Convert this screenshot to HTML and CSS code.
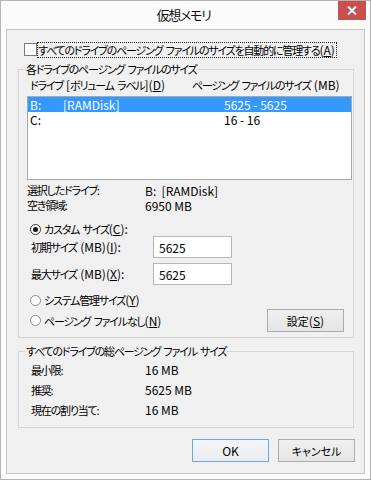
FILE: index.html
```html
<!DOCTYPE html>
<html lang="ja">
  <head>
    <meta charset="UTF-8" />
    <meta name="viewport" content="width=device-width, initial-scale=1.0" />
    <title>仮想メモリ</title>
    <link rel="stylesheet" href="styles.css">
  </head>
  <body>
    <div class="window">
      <div class="titlebar">
        <span></span>
        <div class="title">仮想メモリ</div>
        <div class="close">
          <svg width="28" height="19" viewBox="0 0 28 19">
            <path d="M10 5.5 L18 13.5 M18 5.5 L10 13.5" stroke="#fff" stroke-width="1.8" fill="none" />
          </svg>
        </div>
      </div>
      <div class="client">
        <div class="auto">
          <span class="checkbox"></span>
          <span class="focus">すべてのドライブのページング ファイルのサイズを自動的に管理する<span class="lat">(<u>A</u>)</span></span>
        </div>

        <fieldset class="group drives">
          <legend>各ドライブのページング ファイルのサイズ</legend>
          <div class="list-head">
            <span>ドライブ <span class="lat">[</span>ボリューム ラベル<span class="lat">](<u>D</u>)</span></span>
            <span>ページング ファイルのサイズ <span class="lat">(MB)</span></span>
          </div>
          <div class="listbox">
            <div class="row selected">
              <span class="lat">B:</span><span class="lat">[RAMDisk]</span><span class="lat">5625 - 5625</span>
            </div>
            <div class="row">
              <span class="lat">C:</span><span></span><span class="lat">16 - 16</span>
            </div>
          </div>
          <div class="info">
            <div class="pair"><span class="key">選択したドライブ:</span><span class="lat">B:&nbsp;&nbsp;[RAMDisk]</span></div>
            <div class="pair"><span class="key">空き領域:</span><span class="lat">6950 MB</span></div>
          </div>

          <div class="radio-row custom">
            <span class="radio checked"></span>
            <span>カスタム サイズ<span class="lat">(<u>C</u>):</span></span>
          </div>
          <div class="size-row first">
            <span>初期サイズ <span class="lat">(MB)(<u>I</u>):</span></span>
            <input class="textbox" type="text" value="5625" />
          </div>
          <div class="size-row">
            <span>最大サイズ <span class="lat">(MB)(<u>X</u>):</span></span>
            <input class="textbox" type="text" value="5625" />
          </div>
          <div class="radio-row system">
            <span class="radio"></span>
            <span>システム管理サイズ<span class="lat">(<u>Y</u>)</span></span>
          </div>
          <div class="last-row">
            <div class="radio-row">
              <span class="radio"></span>
              <span>ページング ファイルなし<span class="lat">(<u>N</u>)</span></span>
            </div>
            <button class="btn set">設定<span class="lat">(<u>S</u>)</span></button>
          </div>
        </fieldset>

        <fieldset class="group totals">
          <legend>すべてのドライブの総ページング ファイル サイズ</legend>
          <div class="pair"><span class="key">最小限:</span><span class="lat">16 MB</span></div>
          <div class="pair"><span class="key">推奨:</span><span class="lat">5625 MB</span></div>
          <div class="pair"><span class="key">現在の割り当て:</span><span class="lat">16 MB</span></div>
        </fieldset>

        <div class="actions">
          <button class="btn default"><span class="lat">OK</span></button>
          <button class="btn">キャンセル</button>
        </div>
      </div>
    </div>
  </body>
</html>
```

FILE: styles.css
```css
* {
  box-sizing: border-box;
}
body {
  margin: 0;
  font-family: "Noto Sans CJK JP", "Noto Sans", sans-serif;
  font-size: 11px;
  line-height: 14px;
  letter-spacing: -1.2px;
  word-spacing: 2px;
  white-space: nowrap;
  color: #000;
  font-feature-settings: "palt";
  background: #fff;
}
u {
  text-decoration-thickness: 1px;
}
.lat {
  font-size: 12px;
  letter-spacing: 0;
  word-spacing: 0;
}
.window {
  width: 371px;
  height: 480px;
  border: 1px solid #b4b4b4;
  background: #fbfbfb;
  padding: 0 5px 5px;
  display: flex;
  flex-direction: column;
}
.titlebar {
  height: 28px;
  margin: 0 -5px;
  padding-right: 4px;
  display: grid;
  grid-template-columns: 1fr auto 1fr;
  align-items: start;
}
.title {
  font-size: 13px;
  letter-spacing: -1.3px;
  line-height: 28px;
  color: #111;
}
.close {
  justify-self: end;
  width: 28px;
  height: 19px;
  background: #c75050;
  display: flex;
}
.client {
  flex: 1;
  background: #f0f0f0;
  border: 1px solid #c4c4c4;
  padding-top: 12px;
  display: flex;
  flex-direction: column;
}
.auto {
  display: flex;
  align-items: center;
  height: 15px;
  margin-left: 17px;
}
.checkbox {
  width: 13px;
  height: 13px;
  border: 1px solid #7a7a7a;
  background: #fff;
}
.focus {
  border: 1px dotted #222;
  line-height: 13px;
  padding: 0 1px 0 0;
}

/* group boxes */
.group {
  margin: 5px 10px 0 11px;
  padding: 0 1px 5px 8px;
  border: 1px solid #d5d5d5;
  min-width: 0;
}
.group legend {
  padding: 0 1px;
  margin-left: -2px;
  line-height: 14px;
}
.list-head {
  margin: 2px 0 0 3px;
  display: grid;
  grid-template-columns: 162px auto;
}
.listbox {
  margin-top: 4px;
  height: 84px;
  border: 1px solid #a8a8a8;
  background: #fff;
}
.row {
  height: 15px;
  line-height: 15px;
  padding-left: 2px;
  display: grid;
  grid-template-columns: 33px 161px auto;
}
.row.selected {
  background: #3399ff;
  color: #fff;
}
.info {
  margin-top: 3px;
}
.info .pair {
  line-height: 15px;
}
.pair {
  display: flex;
}
.info .key {
  width: 118px;
}

.radio-row {
  display: flex;
  align-items: center;
  height: 14px;
  margin-left: 3px;
}
.radio {
  width: 11px;
  height: 11px;
  border: 1px solid #8c8c8c;
  border-radius: 50%;
  background: #fff;
  margin-right: 3px;
  display: flex;
  align-items: center;
  justify-content: center;
}
.radio.checked {
  border-color: #333;
}
.radio.checked::after {
  content: "";
  width: 5px;
  height: 5px;
  border-radius: 50%;
  background: #111;
}
.custom {
  margin-top: 9px;
}
.size-row {
  display: grid;
  grid-template-columns: 122px 79px;
  align-items: center;
  margin: 5px 0 0 4px;
}
.size-row.first {
  margin-top: 0;
}
.textbox {
  height: 22px;
  width: 79px;
  border: 1px solid #b4b6bb;
  background: #fff;
  font: inherit;
  font-size: 12px;
  letter-spacing: 0;
  padding: 0 5px;
  color: #000;
}
.system {
  margin-top: 8px;
}
.last-row {
  margin-top: 2px;
  display: flex;
  align-items: center;
  justify-content: space-between;
}
.btn {
  width: 77px;
  height: 23px;
  border: 1px solid #acacac;
  background: linear-gradient(#f0f0f0, #e5e5e5);
  font: inherit;
  color: #000;
  padding: 0;
}
.btn.set {
  margin-right: 8px;
}
.btn.default {
  border-color: #6ea7e0;
  background: linear-gradient(#f3f5f7, #e9ecef);
}

.totals {
  margin-top: 6px;
  padding: 2px 1px 7px 12px;
}
.totals legend {
  margin-left: -6px;
}
.totals .pair {
  line-height: 20px;
}
.totals .key {
  width: 114px;
}

.actions {
  margin: 11px 9px 0 0;
  display: flex;
  justify-content: flex-end;
  gap: 9px;
}
```
